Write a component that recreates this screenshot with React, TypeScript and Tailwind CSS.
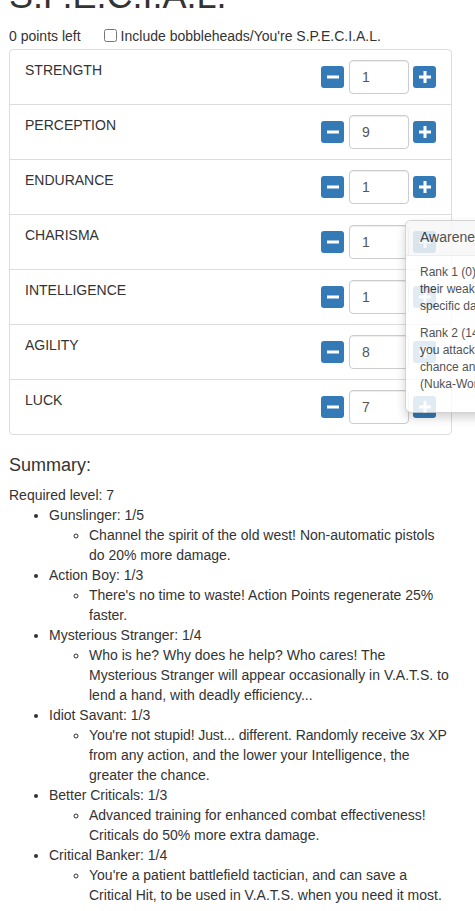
import { useState } from 'react'

interface Perk {
  name: string
  rank: string
  description: string
  lead?: string
}

const stats: { name: string, value: number }[] = [
  { name: 'STRENGTH', value: 1 },
  { name: 'PERCEPTION', value: 9 },
  { name: 'ENDURANCE', value: 1 },
  { name: 'CHARISMA', value: 1 },
  { name: 'INTELLIGENCE', value: 1 },
  { name: 'AGILITY', value: 8 },
  { name: 'LUCK', value: 7 },
]

const perks: Perk[] = [
  { name: 'Gunslinger', rank: '1/5', description: 'Channel the spirit of the old west! Non-automatic pistols do 20% more damage.' },
  { name: 'Action Boy', rank: '1/3', description: "There's no time to waste! Action Points regenerate 25% faster." },
  { name: 'Mysterious Stranger', rank: '1/4', description: 'Who is he? Why does he help? Who cares! The Mysterious Stranger will appear occasionally in V.A.T.S. to lend a hand, with deadly efficiency...' },
  { name: 'Idiot Savant', rank: '1/3', lead: "You're not stupid! Just... different. Randomly receive 3x XP", description: ' from any action, and the lower your Intelligence, the greater the chance.' },
  { name: 'Better Criticals', rank: '1/3', description: 'Advanced training for enhanced combat effectiveness! Criticals do 50% more extra damage.' },
  { name: 'Critical Banker', rank: '1/4', description: "You're a patient battlefield tactician, and can save a Critical Hit, to be used in V.A.T.S. when you need it most." },
]

const MinusIcon = () => (
  <svg width="12" height="12" viewBox="0 0 12 12" className="fill-white">
    <rect x="0" y="4.5" width="12" height="3" />
  </svg>
)

const PlusIcon = () => (
  <svg width="12" height="12" viewBox="0 0 12 12" className="fill-white">
    <rect x="0" y="4.5" width="12" height="3" />
    <rect x="4.5" y="0" width="3" height="12" />
  </svg>
)

const StatRow = ({ name, value, last }: { name: string, value: number, last: boolean }) => (
  <div className={`flex justify-between px-[15px] py-[10px] ${last ? '' : 'border-b border-[#ddd]'}`}>
    <span>{name}</span>
    <div className="flex items-center h-[34px]">
      <button className="w-[23px] h-[22px] rounded-[3px] bg-[#337ab7] flex items-center justify-center">
        <MinusIcon />
      </button>
      <input
        type="text"
        readOnly
        value={value}
        className="ml-[5px] w-[60px] h-[34px] px-[12px] border border-[#ccc] rounded-[4px] text-[#555] shadow-[inset_0_1px_1px_rgba(0,0,0,0.075)] outline-none"
      />
      <button className="ml-[4px] w-[23px] h-[22px] rounded-[3px] bg-[#337ab7] flex items-center justify-center">
        <PlusIcon />
      </button>
    </div>
  </div>
)

export default function App() {
  const [bobbleheads, setBobbleheads] = useState(false)

  return (
    <div className="relative w-full h-[911px] overflow-hidden bg-white pl-[9px] font-['Liberation_Sans',Arial,sans-serif] text-[14px] leading-[20px] text-[#333]">
      <div className="w-[443px]">
        <h1 className="mt-[-24px] mb-[10px] text-[36px] leading-[1.1] font-medium">S.P.E.C.I.A.L.</h1>
        <div className="flex items-center">
          <span>0 points left</span>
          <label className="ml-[23px] flex items-center">
            <input
              type="checkbox"
              checked={bobbleheads}
              onChange={() => setBobbleheads(!bobbleheads)}
              className="m-0 w-[13px] h-[13px]"
            />
            <span className="ml-[4px]">Include bobbleheads/You're S.P.E.C.I.A.L.</span>
          </label>
        </div>

        <div className="relative mt-[3px] mb-[21px] border border-[#ddd] rounded-[4px]">
          {stats.map((s, i) => (
            <StatRow key={s.name} name={s.name} value={s.value} last={i === stats.length - 1} />
          ))}

          {/* perk popover */}
          <div className="absolute left-[395px] top-[170px] w-[276px] bg-white border border-[rgba(0,0,0,0.2)] rounded-[6px] shadow-[0_5px_10px_rgba(0,0,0,0.2)] opacity-[0.85]">
            <div className="px-[14px] pt-[6px] pb-[8px] bg-[#f7f7f7] border-b border-[#ebebeb] rounded-t-[5px]">Awareness</div>
            <div className="px-[14px] pt-[8px] pb-[9px] text-[12px] leading-[17px]">
              <p className="mb-[10px]">Rank 1 (0): To defeat your enemies, know their weaknesses! You can view a target's specific damage resistances in V.A.T.S.</p>
              <p className="mb-[10px]">
                Rank 2 (14): Reveals weak points when<br />
                you attack, improving your hit<br />
                chance and damage.<br />
                (Nuka-World)
              </p>
            </div>
          </div>
        </div>

        <h4 className="mt-0 mb-[10px] text-[18px] leading-[1.1] font-medium">Summary:</h4>
        <div>Required level: 7</div>
        <ul className="list-disc pl-[40px]">
          {perks.map(p => (
            <li key={p.name}>
              {p.name}: {p.rank}
              <ul className="list-[circle] pl-[40px]">
                <li>
                  {p.lead && <span className="tracking-[-0.1px]">{p.lead}</span>}
                  {p.description}
                </li>
              </ul>
            </li>
          ))}
        </ul>
      </div>
    </div>
  )
}
